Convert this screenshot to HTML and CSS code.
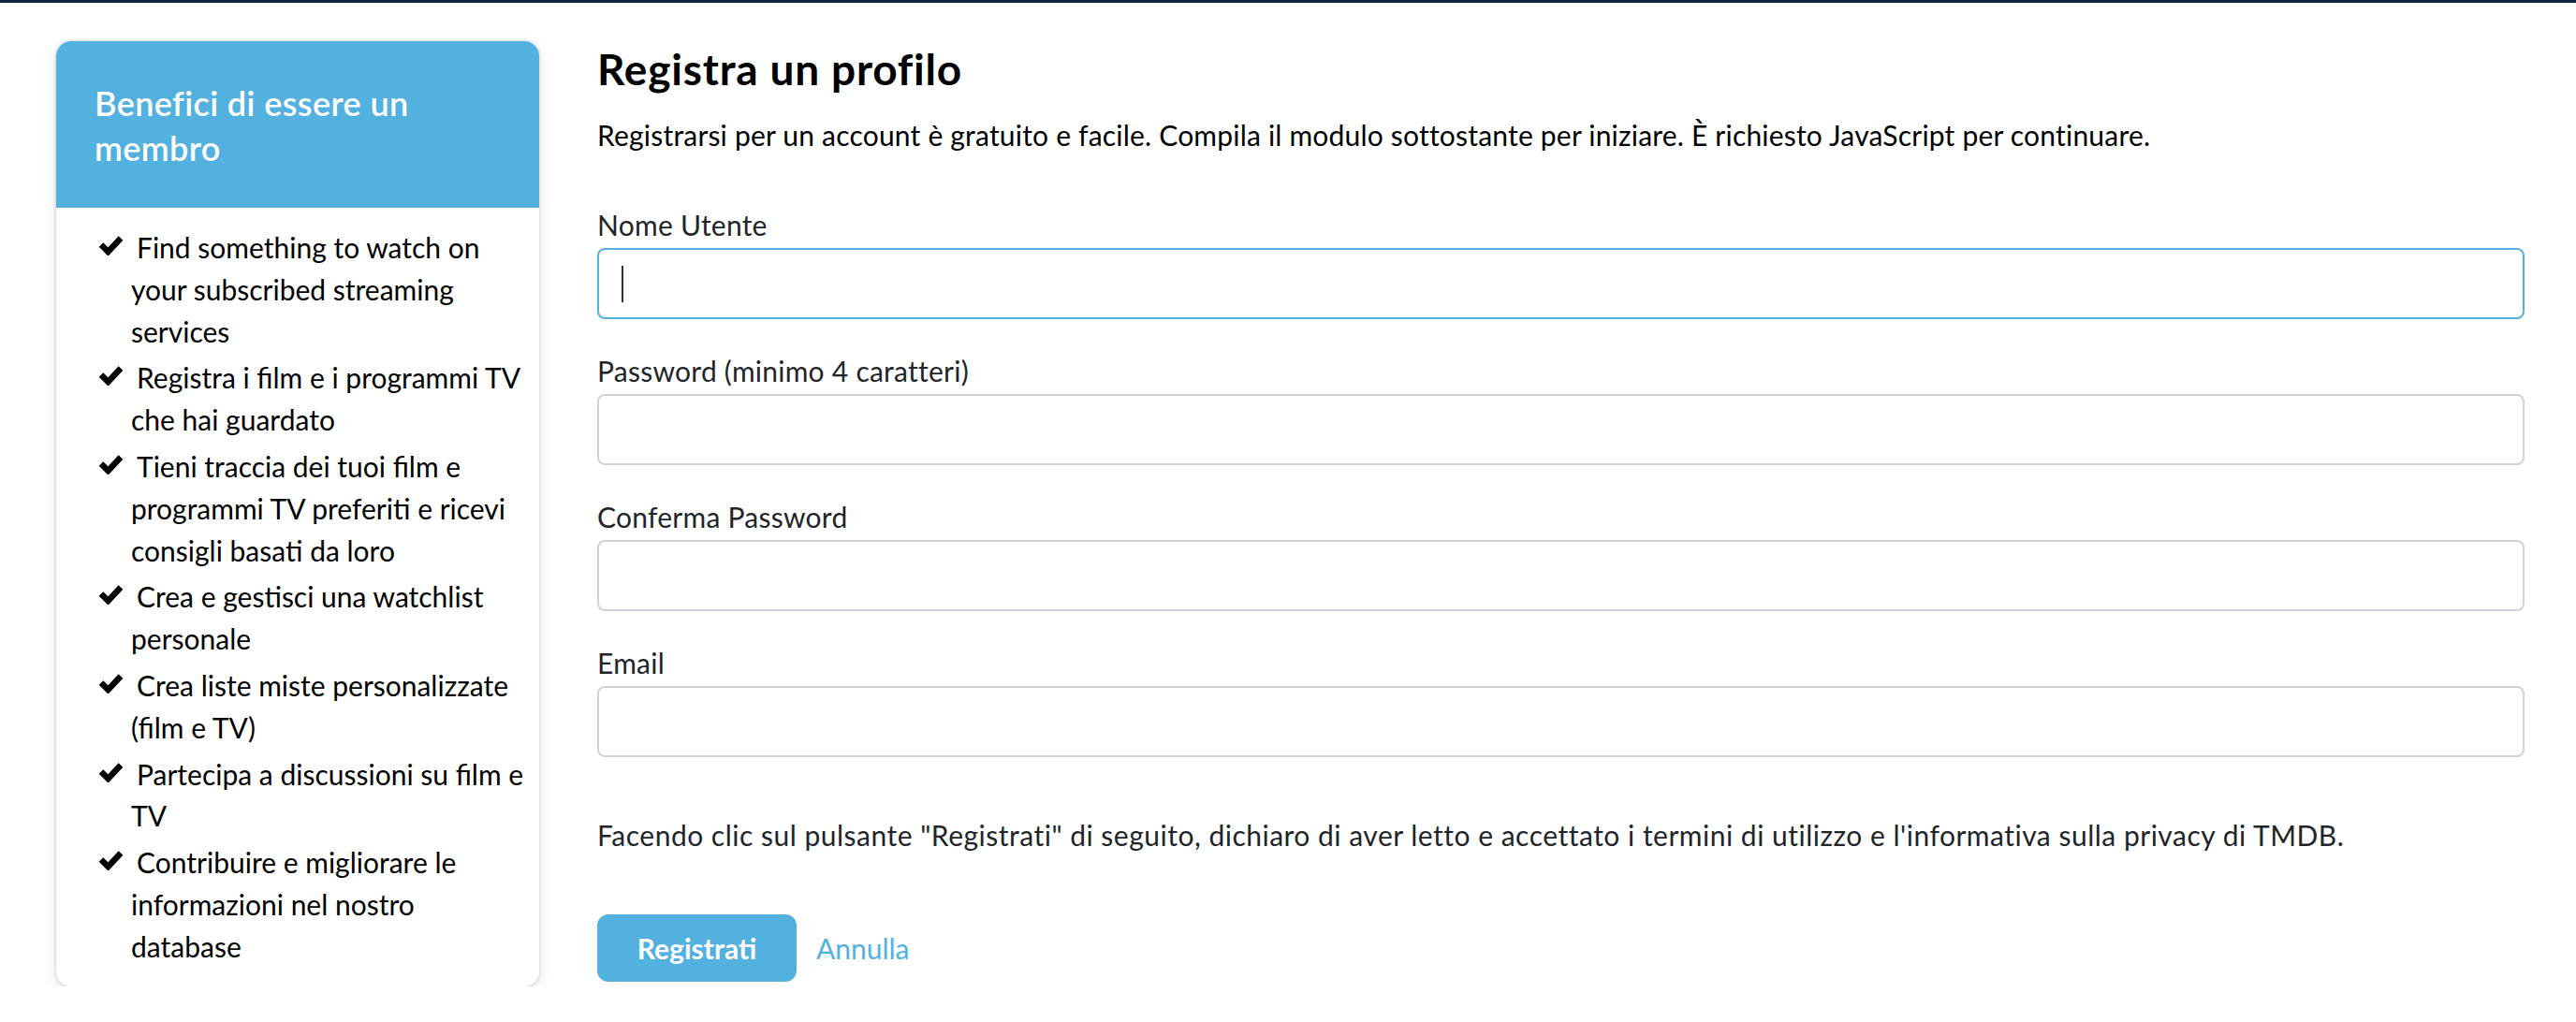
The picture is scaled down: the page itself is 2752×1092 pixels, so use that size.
FILE: index.html
```html
<!DOCTYPE html>
<html lang="it">
<head>
<meta charset="utf-8">
<title>Registra un profilo</title>
<link rel="stylesheet" href="styles.css">
</head>
<body>
<div class="topbar"></div>
<div class="page">
  <aside class="card">
    <h2 class="card-title">Benefici di essere un<br>membro</h2>
    <ul class="benefits">
      <li><svg class="check" viewBox="0 0 27 23" width="27" height="23"><polyline points="3,11.5 10.5,19 24,4.5" /></svg>Find something to watch on<br>your subscribed streaming<br>services</li>
      <li><svg class="check" viewBox="0 0 27 23" width="27" height="23"><polyline points="3,11.5 10.5,19 24,4.5" /></svg>Registra i film e i programmi TV<br>che hai guardato</li>
      <li><svg class="check" viewBox="0 0 27 23" width="27" height="23"><polyline points="3,11.5 10.5,19 24,4.5" /></svg>Tieni traccia dei tuoi film e<br>programmi TV preferiti e ricevi<br>consigli basati da loro</li>
      <li><svg class="check" viewBox="0 0 27 23" width="27" height="23"><polyline points="3,11.5 10.5,19 24,4.5" /></svg>Crea e gestisci una watchlist<br>personale</li>
      <li><svg class="check" viewBox="0 0 27 23" width="27" height="23"><polyline points="3,11.5 10.5,19 24,4.5" /></svg>Crea liste miste personalizzate<br>(film e TV)</li>
      <li><svg class="check" viewBox="0 0 27 23" width="27" height="23"><polyline points="3,11.5 10.5,19 24,4.5" /></svg>Partecipa a discussioni su film e<br>TV</li>
      <li><svg class="check" viewBox="0 0 27 23" width="27" height="23"><polyline points="3,11.5 10.5,19 24,4.5" /></svg>Contribuire e migliorare le<br>informazioni nel nostro<br>database</li>
    </ul>
  </aside>
  <main class="content">
    <h2 class="title">Registra un profilo</h2>
    <p class="intro">Registrarsi per un account è gratuito e facile. Compila il modulo sottostante per iniziare. È richiesto JavaScript per continuare.</p>
    <form class="form">
      <div class="field">
        <label class="label" for="username">Nome Utente</label>
        <div class="input-wrap">
          <input class="input input-focus" id="username" type="text">
          <span class="caret"></span>
        </div>
      </div>
      <div class="field">
        <label class="label" for="password">Password (minimo 4 caratteri)</label>
        <input class="input" id="password" type="password">
      </div>
      <div class="field">
        <label class="label" for="password2">Conferma Password</label>
        <input class="input" id="password2" type="password">
      </div>
      <div class="field">
        <label class="label" for="email">Email</label>
        <input class="input" id="email" type="email">
      </div>
      <p class="terms">Facendo clic sul pulsante "Registrati" di seguito, dichiaro di aver letto e accettato i termini di utilizzo e l'informativa sulla privacy di TMDB.</p>
      <div class="actions">
        <button class="btn" type="button">Registrati</button>
        <a class="cancel" href="#">Annulla</a>
      </div>
    </form>
  </main>
</div>
</body>
</html>
```
FILE: styles.css
```css
html, body {
  margin: 0;
  padding: 0;
  background: #fff;
}

body {
  font-family: "Lato", "Liberation Sans", sans-serif;
  color: #000;
}

.topbar {
  height: 3px;
  background: #0f2640;
}

.page {
  display: flex;
  align-items: flex-start;
  gap: 62px;
  padding: 41px 55px 0 60px;
}

.card {
  flex: 0 0 516px;
  width: 516px;
  background: #fff;
  border-radius: 16px;
  overflow: hidden;
  box-shadow: 0 0 0 2px rgba(0, 0, 0, 0.06), 0 4px 16px rgba(0, 0, 0, 0.10);
}

.card-title {
  margin: 0;
  background: #53b1df;
  color: #fff;
  font-size: 36px;
  font-weight: 600;
  letter-spacing: 0.4px;
  line-height: 48px;
  padding: 42px 40px 40px 41px;
}

.benefits {
  list-style: none;
  margin: 0;
  padding: 20px 6px 20px 80px;
  font-size: 30px;
  line-height: 44.8px;
  white-space: nowrap;
}

.benefits li + li {
  margin-top: 5px;
}

.check {
  display: inline-block;
  margin-left: -35px;
  margin-right: 14px;
  vertical-align: 3px;
}

.check polyline {
  fill: none;
  stroke: #000;
  stroke-width: 6.5;
  stroke-linejoin: miter;
  stroke-linecap: butt;
}

.content {
  flex: 1 1 auto;
  min-width: 0;
}

.title {
  margin: 4px 0 0;
  font-size: 46px;
  line-height: 52.8px;
  font-weight: 700;
  letter-spacing: 0.8px;
}

.intro {
  margin: 25px 0 60px;
  font-size: 30px;
  line-height: 36px;
  letter-spacing: 0.2px;
}

.form {
  margin: 0;
}

.field {
  margin-bottom: 37px;
}

.label {
  display: block;
  font-size: 30px;
  line-height: 36px;
  color: #212529;
  margin-bottom: 7px;
  letter-spacing: 0.25px;
}

.input-wrap {
  position: relative;
}

.input {
  display: block;
  box-sizing: border-box;
  width: 100%;
  height: 76px;
  margin: 0;
  padding: 0 25px;
  border: 2px solid #ced4da;
  border-radius: 8px;
  background: #fff;
  font-family: inherit;
  font-size: 30px;
  outline: none;
}

.input-focus {
  border-color: #53b1df;
}

.caret {
  position: absolute;
  left: 26px;
  top: 19px;
  width: 2px;
  height: 39px;
  background: #333;
}

.terms {
  margin: 65px 0 67px;
  font-size: 30px;
  line-height: 36px;
  color: #212529;
  letter-spacing: 0.5px;
}

.actions {
  display: flex;
  align-items: center;
  gap: 21px;
}

.btn {
  width: 213px;
  height: 72px;
  padding: 0;
  border: none;
  border-radius: 12px;
  background: #53b1df;
  color: #fff;
  font-family: inherit;
  font-size: 30px;
  font-weight: 700;
  line-height: 36px;
}

.cancel {
  color: #53b1df;
  font-size: 30px;
  line-height: 36px;
  text-decoration: none;
}
```
